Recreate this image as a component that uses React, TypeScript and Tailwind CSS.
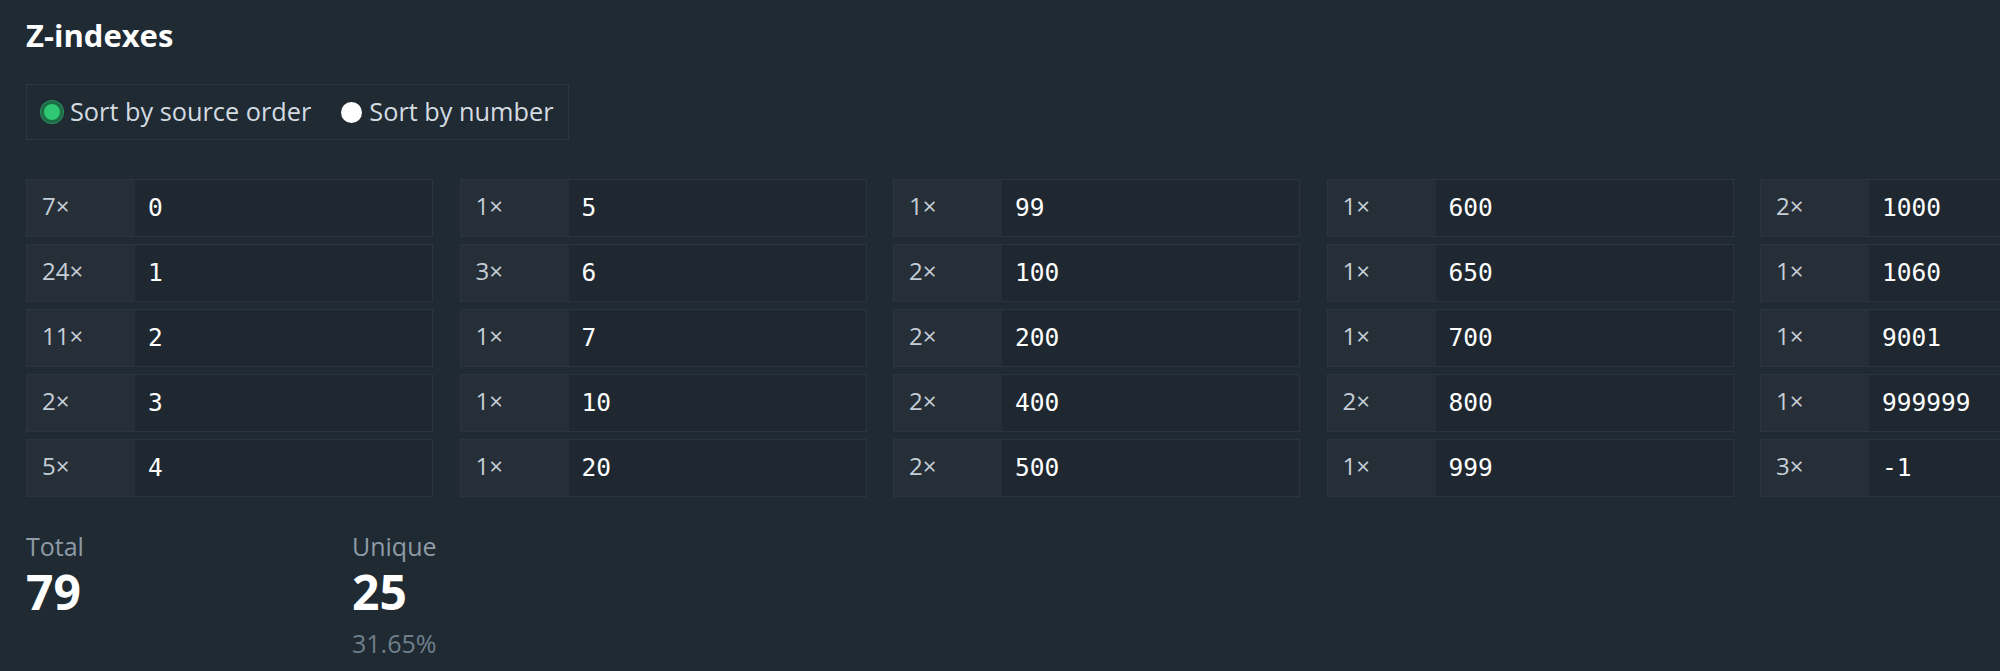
import React from 'react'

const entries: [number, string][] = [
  [7, '0'], [24, '1'], [11, '2'], [2, '3'], [5, '4'],
  [1, '5'], [3, '6'], [1, '7'], [1, '10'], [1, '20'],
  [1, '99'], [2, '100'], [2, '200'], [2, '400'], [2, '500'],
  [1, '600'], [1, '650'], [1, '700'], [2, '800'], [1, '999'],
  [2, '1000'], [1, '1060'], [1, '9001'], [1, '999999'], [3, '-1'],
]

function Radio({ checked, label }: { checked?: boolean; label: string }) {
  return (
    <label className="flex items-center gap-[7px]">
      {checked ? (
        <span className="w-[22px] h-[22px] rounded-full border-[3px] border-[#1d6b45] bg-[#2fc774] shadow-[0_0_0_1px_#2a8f5c]" />
      ) : (
        <span className="w-[21px] h-[21px] rounded-full bg-white" />
      )}
      <span>{label}</span>
    </label>
  )
}

export default function App() {
  const total = entries.reduce((s, [n]) => s + n, 0)
  const unique = entries.length

  return (
    <div className="w-[2000px] h-[671px] overflow-hidden bg-[#1f2a33] pl-[26px] pt-[14px] font-['Open_Sans',sans-serif] text-[#e6edf3]">
      <h2 className="text-[31px] leading-[42px] font-bold text-white">Z-indexes</h2>

      <div className="mt-[28px] inline-flex items-center gap-[30px] h-[56px] border border-[#2c3640] pl-[14px] pr-[14px] text-[25.3px] text-[#d4dbe1]">
        <Radio checked label="Sort by source order" />
        <Radio label="Sort by number" />
      </div>

      <div className="mt-[39px] grid grid-flow-col grid-rows-5 auto-cols-[407px] gap-x-[26.5px] gap-y-[7px]">
        {entries.map(([count, value]) => (
          <div key={value} className="flex h-[58px] border border-[#2b353e] bg-[#1f2831]">
            <div className="w-[108px] shrink-0 flex items-center pl-[15px] pb-[5px] bg-[#262f38] text-[24px] text-[#c5ced6]">
              {count}×
            </div>
            <div className="flex items-center pl-[13px] font-['DejaVu_Sans_Mono',monospace] text-[24.5px] text-white">
              {value}
            </div>
          </div>
        ))}
      </div>

      <div className="mt-[33px] flex">
        <div className="w-[326px]">
          <div className="text-[25px] leading-[32px] text-[#8d9ba6]">Total</div>
          <div className="mt-[2px] text-[48px] leading-[56px] font-bold text-white">{total}</div>
        </div>
        <div>
          <div className="text-[25px] leading-[32px] text-[#8d9ba6]">Unique</div>
          <div className="mt-[2px] text-[48px] leading-[56px] font-bold text-white">{unique}</div>
          <div className="mt-[8px] text-[25px] leading-[30px] text-[#6f7f8a]">
            {((unique / total) * 100).toFixed(2)}%
          </div>
        </div>
      </div>
    </div>
  )
}
